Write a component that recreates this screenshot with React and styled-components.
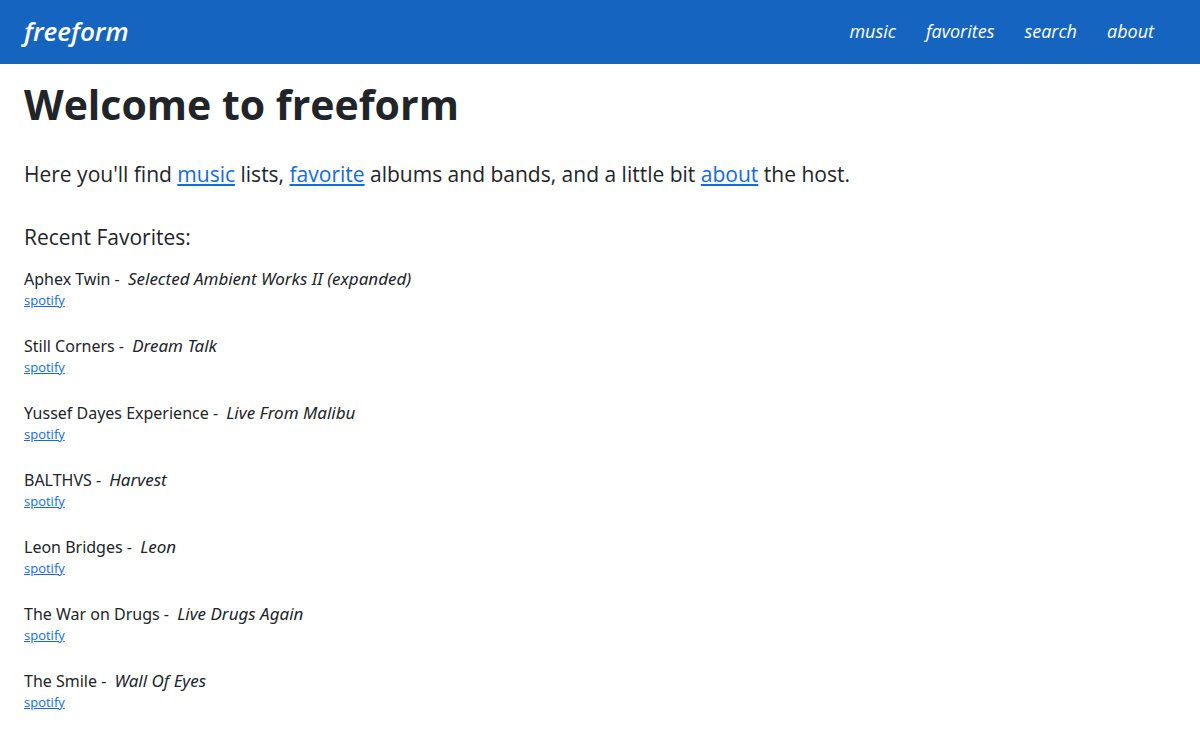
import React from 'react';
import styled, { createGlobalStyle } from 'styled-components';

const GlobalStyle = createGlobalStyle`
  * {
    box-sizing: border-box;
  }

  body {
    margin: 0;
    color: #212529;
    background-color: #fff;
    font-family: "Segoe UI", "Open Sans", "Noto Sans", sans-serif;
    font-size: 16px;
    line-height: 24px;
  }
`;

const Header = styled.header`
  display: flex;
  align-items: center;
  justify-content: space-between;
  height: 64px;
  padding: 0 46px 2px 24px;
  background-color: #1565c0;
`;

const Brand = styled.a`
  color: #fff;
  font-size: 26px;
  font-style: italic;
  font-weight: 600;
  text-decoration: none;
`;

const Nav = styled.nav`
  display: flex;
  gap: 30px;
`;

const NavLink = styled.a`
  color: #fff;
  font-size: 18px;
  font-style: italic;
  font-weight: 500;
  text-decoration: none;
`;

const Main = styled.main`
  padding: 16px 24px;
`;

const Title = styled.h1`
  margin: 0;
  font-size: 41px;
  font-weight: 700;
  line-height: 48px;
`;

const Intro = styled.p`
  margin: 30px 0;
  font-size: 21px;
  line-height: 32px;
`;

const Subtitle = styled.h2`
  margin: 0 0 14px;
  font-size: 21px;
  font-weight: 400;
  line-height: 34px;
`;

const Link = styled.a`
  color: #0f6be6;
`;

const List = styled.ul`
  display: grid;
  gap: 24px;
  margin: 0;
  padding: 0;
  list-style: none;
`;

const Album = styled.div`
  font-family: "Segoe UI", "Noto Sans", sans-serif;
  line-height: 22px;

  em {
    margin-left: 4px;
    font-size: 17px;
  }
`;

const SmallLink = styled(Link)`
  display: block;
  width: fit-content;
  font-size: 13px;
  line-height: 21px;
`;

const pages = ['music', 'favorites', 'search', 'about'];

const favorites = [
  { artist: 'Aphex Twin', album: 'Selected Ambient Works II (expanded)' },
  { artist: 'Still Corners', album: 'Dream Talk' },
  { artist: 'Yussef Dayes Experience', album: 'Live From Malibu' },
  { artist: 'BALTHVS', album: 'Harvest' },
  { artist: 'Leon Bridges', album: 'Leon' },
  { artist: 'The War on Drugs', album: 'Live Drugs Again' },
  { artist: 'The Smile', album: 'Wall Of Eyes' },
];

export default function App() {
  return (
    <>
      <GlobalStyle />
      <Header>
        <Brand href="#home">freeform</Brand>
        <Nav>
          {pages.map((page) => (
            <NavLink key={page} href={`#${page}`}>{page}</NavLink>
          ))}
        </Nav>
      </Header>
      <Main>
        <Title>Welcome to freeform</Title>
        <Intro>
          Here you'll find <Link href="#music">music</Link> lists,{' '}
          <Link href="#favorites">favorite</Link> albums and bands, and a little bit{' '}
          <Link href="#about">about</Link> the host.
        </Intro>
        <Subtitle>Recent Favorites:</Subtitle>
        <List>
          {favorites.map(({ artist, album }) => (
            <li key={artist}>
              <Album>
                {artist} - <em>{album}</em>
              </Album>
              <SmallLink href="#spotify">spotify</SmallLink>
            </li>
          ))}
        </List>
      </Main>
    </>
  );
}
